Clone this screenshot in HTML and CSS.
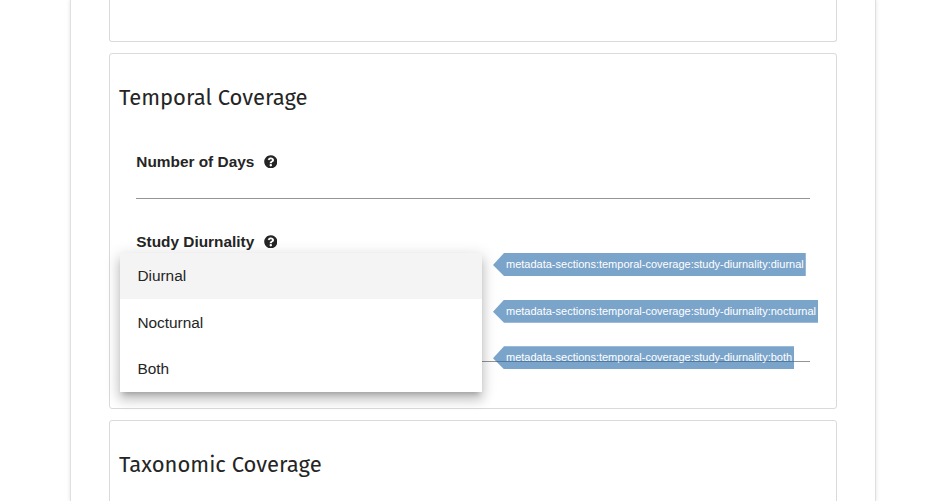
FILE: index.html
```html
<!DOCTYPE html>
<html lang="en">
<head>
<meta charset="utf-8">
<title>Temporal Coverage</title>
<link rel="stylesheet" href="styles.css">
</head>
<body>
<svg class="defs" width="0" height="0"><symbol id="help" viewBox="0 0 512 512"><path fill="currentColor" d="M504 256c0 137-111 248-248 248S8 393 8 256 119 8 256 8s248 111 248 248zM262.7 90c-54.500 0-89.300 23-116.500 63.800-3.500 5.300-2.400 12.400 2.700 16.300l34.700 26.300c5.200 3.900 12.600 3 16.700-2.100 17.900-22.700 30.100-35.800 57.300-35.800 20.400 0 45.700 13.100 45.700 33 0 15-12.400 22.700-32.500 34C247.100 238.500 216 254.900 216 296v4c0 6.600 5.400 12 12 12h56c6.600 0 12-5.400 12-12v-1.300c0-28.500 83.200-29.600 83.200-106.700 0-58-60.200-102-116.500-102zM256 338c-25.400 0-46 20.600-46 46s20.600 46 46 46 46-20.600 46-46-20.600-46-46-46z"/></symbol></svg>
<main class="page">
  <section class="card previous"></section>
  <section class="card temporal">
    <h2 class="title">Temporal Coverage</h2>
    <div class="field days">
      <div class="label">Number of Days <svg class="help"><use href="#help"/></svg></div>
    </div>
    <div class="field diurnality">
      <div class="label">Study Diurnality <svg class="help"><use href="#help"/></svg></div>
      <div class="menu">
        <div class="option active">Diurnal<span class="tag">metadata-sections:temporal-coverage:study-diurnality:diurnal</span></div>
        <div class="option">Nocturnal<span class="tag">metadata-sections:temporal-coverage:study-diurnality:nocturnal</span></div>
        <div class="option">Both<span class="tag">metadata-sections:temporal-coverage:study-diurnality:both</span></div>
      </div>
    </div>
  </section>
  <section class="card taxonomic">
    <h2 class="title">Taxonomic Coverage</h2>
  </section>
</main>
</body>
</html>
```
FILE: styles.css
```css
* { box-sizing: border-box; }
body {
  margin: 0;
  height: 501px;
  overflow: hidden;
  background: #fff;
  color: #252525;
  font-family: "Liberation Sans", Arial, sans-serif;
}
.defs { position: absolute; }
.page {
  width: 806px;
  height: 501px;
  margin-left: 70px;
  padding: 0 38px;
  border: solid #e0e0e0;
  border-width: 0 1px;
  box-shadow: 0 0 4px rgba(0, 0, 0, .12);
}
.card {
  width: 728px;
  border: 1px solid #dadada;
  border-radius: 3px;
}
.previous { height: 42px; border-top: 0; border-radius: 0 0 3px 3px; }
.temporal { height: 356px; margin-top: 11px; }
.taxonomic { height: 100px; margin-top: 11px; }
.title {
  margin: 28px 0 0 9px;
  font: 400 22px/32px "Fira Sans", "Noto Sans", sans-serif;
  white-space: nowrap;
}
.field {
  position: relative;
  width: 674px;
  margin-left: 26px;
  border-bottom: 1px solid #949494;
}
.days { height: 47px; margin-top: 38px; }
.diurnality { height: 130px; margin-top: 33px; }
.label {
  display: flex;
  align-items: center;
  height: 20px;
  padding-left: .3px;
  font-size: 15.4px;
  font-weight: 700;
}
.help { width: 13.6px; height: 13.6px; margin: -1px 0 0 9.5px; }
.menu {
  position: absolute;
  top: 21px;
  left: -16px;
  width: 362px;
  height: 139px;
  background: #fff;
  box-shadow: 0 5px 5px -3px rgba(0, 0, 0, .2), 0 8px 10px 1px rgba(0, 0, 0, .14), 0 3px 14px 2px rgba(0, 0, 0, .12);
}
.option {
  position: relative;
  height: 46.67px;
  padding-left: 17.4px;
  font-size: 15.4px;
  line-height: 47px;
}
.option.active {
  height: 45.67px;
  background: #f4f4f4;
  line-height: 45px;
}
.tag {
  position: absolute;
  top: 1px;
  left: 373px;
  height: 23px;
  padding: 0 2px 0 13px;
  background: #2368a8;
  clip-path: polygon(0 12px, 11px 0, 100% 0, 100% 100%, 11px 100%);
  color: #fff;
  font-size: 11px;
  line-height: 23px;
  opacity: .6;
  white-space: nowrap;
}
.active .tag { top: 0; }
```
